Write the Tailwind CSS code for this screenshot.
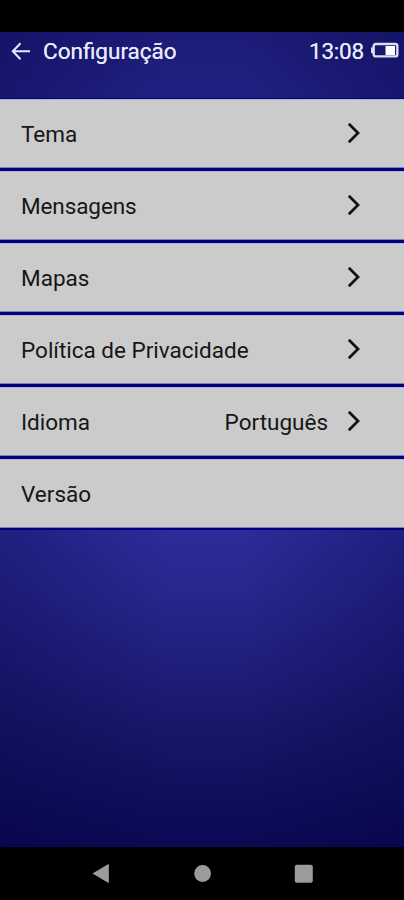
<!DOCTYPE html>
<html lang="pt">
<head>
  <meta charset="UTF-8">
  <meta name="viewport" content="width=device-width, initial-scale=1.0">
  <title>Configuração</title>
  <script src="https://cdn.jsdelivr.net/npm/@tailwindcss/browser@4"></script>
</head>
<body class="bg-black h-[900px] flex flex-col overflow-hidden pt-8 font-['Roboto',sans-serif]">
  <div class="grow flex flex-col bg-[linear-gradient(90deg,rgba(0,0,64,0.3)_0%,rgba(0,0,64,0)_42%,rgba(0,0,64,0)_60%,rgba(0,0,64,0.3)_100%),linear-gradient(180deg,#1c1c78_0px,#202082_66px,#2e2ea0_450px,#2c2c9a_500px,#26268b_568px,#1f1f7c_628px,#171769_698px,#0f0e5c_768px,#0b0954_815px)]">
    <header class="h-[66px] flex items-start justify-between pl-[11px] pr-[5px] text-[#e8e8fa] text-[22.5px] leading-[38px]">
      <div class="flex items-center">
        <svg class="w-5 h-[18px] mr-3" viewBox="0 0 20 18" fill="none" stroke="currentColor" stroke-width="2">
          <path d="M19 9.2H2M9.5 1.2L1.8 9.2l7.7 8"/>
        </svg>
        <h1 class="[text-shadow:0_0_0.6px_#e8e8fa]">Configuração</h1>
      </div>
      <div class="flex items-center">
        <span class="mr-[7px] tracking-[-0.2px] [text-shadow:0_0_0.6px_#e8e8fa]">13:08</span>
        <svg class="w-7 h-4 mb-[3px]" viewBox="0 0 28 16">
          <rect x="2.7" y="2" width="23.6" height="12.4" rx="2" fill="none" stroke="#dcdcf2" stroke-width="2.4"/>
          <rect x="0" y="5.2" width="3" height="6" rx="1" fill="#dcdcf2"/>
          <rect x="14.5" y="4" width="9.5" height="9" fill="#fff"/>
        </svg>
      </div>
    </header>

    <main class="border-t border-b-2 border-[#000080] bg-[#000080] flex flex-col gap-[3px] text-[22.5px] text-[#161616]">
      <a href="#" class="h-[69px] bg-[#cbcbcb] border-t border-b border-t-[#b4b4d2] border-b-[#8080bd] pl-[21px] pr-11 pt-0.5 flex items-center justify-between">
        <span>Tema</span>
        <svg class="w-3.5 h-5 mb-[3px]" viewBox="0 0 14 20" fill="none" stroke="#111" stroke-width="2.8"><path d="M2.8 .8L12 10l-9.2 9.2"/></svg>
      </a>
      <a href="#" class="h-[69px] bg-[#cbcbcb] border-t border-b border-t-[#b4b4d2] border-b-[#8080bd] pl-[21px] pr-11 pt-0.5 flex items-center justify-between">
        <span class="tracking-[-0.1px]">Mensagens</span>
        <svg class="w-3.5 h-5 mb-[3px]" viewBox="0 0 14 20" fill="none" stroke="#111" stroke-width="2.8"><path d="M2.8 .8L12 10l-9.2 9.2"/></svg>
      </a>
      <a href="#" class="h-[69px] bg-[#cbcbcb] border-t border-b border-t-[#b4b4d2] border-b-[#8080bd] pl-[21px] pr-11 pt-0.5 flex items-center justify-between">
        <span>Mapas</span>
        <svg class="w-3.5 h-5 mb-[3px]" viewBox="0 0 14 20" fill="none" stroke="#111" stroke-width="2.8"><path d="M2.8 .8L12 10l-9.2 9.2"/></svg>
      </a>
      <a href="#" class="h-[69px] bg-[#cbcbcb] border-t border-b border-t-[#b4b4d2] border-b-[#8080bd] pl-[21px] pr-11 pt-0.5 flex items-center justify-between">
        <span>Política de Privacidade</span>
        <svg class="w-3.5 h-5 mb-[3px]" viewBox="0 0 14 20" fill="none" stroke="#111" stroke-width="2.8"><path d="M2.8 .8L12 10l-9.2 9.2"/></svg>
      </a>
      <a href="#" class="h-[69px] bg-[#cbcbcb] border-t border-b border-t-[#b4b4d2] border-b-[#8080bd] pl-[21px] pr-11 pt-0.5 flex items-center">
        <span>Idioma</span>
        <span class="ml-auto mr-[18px]">Português</span>
        <svg class="w-3.5 h-5 mb-[3px]" viewBox="0 0 14 20" fill="none" stroke="#111" stroke-width="2.8"><path d="M2.8 .8L12 10l-9.2 9.2"/></svg>
      </a>
      <div class="h-[69px] bg-[#cbcbcb] border-t border-b border-t-[#b4b4d2] border-b-[#8080bd] pl-[21px] pt-0.5 flex items-center">
        <span>Versão</span>
      </div>
    </main>
  </div>

  <!-- android navigation bar -->
  <nav class="h-[53px] shrink-0 bg-black">
    <svg class="w-full h-full" viewBox="0 0 404 53" fill="#9b9b9b">
      <path d="M92.5 26.5l15.5-9.2a.6.6 0 0 1 .9.5v17.4a.6.6 0 0 1-.9.5z"/>
      <circle cx="202.6" cy="26.5" r="8.4"/>
      <rect x="294.8" y="17.7" width="18" height="18" rx="2"/>
    </svg>
  </nav>
</body>
</html>
